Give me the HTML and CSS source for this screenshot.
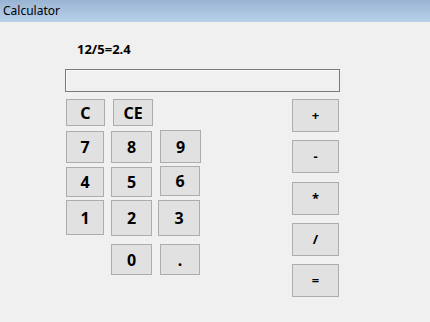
FILE: index.html
```html
<!DOCTYPE html>
<html>
<head>
<meta charset="utf-8">
<title>Calculator</title>
<link rel="stylesheet" href="styles.css">
</head>
<body>
<div class="window">
  <div class="titlebar">Calculator</div>
  <div class="content">
    <div class="result">12/5=2.4</div>
    <div class="display"></div>
    <div class="main">
      <div class="keypad">
        <div class="row r1">
          <button class="key k-c">C</button>
          <button class="key k-ce">CE</button>
        </div>
        <div class="row r2">
          <button class="key k-7">7</button>
          <button class="key k-8">8</button>
          <button class="key k-9">9</button>
        </div>
        <div class="row r3">
          <button class="key k-4">4</button>
          <button class="key k-5">5</button>
          <button class="key k-6">6</button>
        </div>
        <div class="row r4">
          <button class="key k-1">1</button>
          <button class="key k-2">2</button>
          <button class="key k-3">3</button>
        </div>
        <div class="row r5">
          <button class="key k-0">0</button>
          <button class="key k-dot">.</button>
        </div>
      </div>
      <div class="ops">
        <button class="key op">+</button>
        <button class="key op">-</button>
        <button class="key op">*</button>
        <button class="key op">/</button>
        <button class="key op">=</button>
      </div>
    </div>
  </div>
</div>
</body>
</html>
```

FILE: styles.css
```css
* { box-sizing: border-box; }
html, body {
  margin: 0;
  padding: 0;
  background: #f0f0f0;
  width: 430px;
  height: 322px;
  overflow: hidden;
  font-family: "Noto Sans", "Open Sans", sans-serif;
}
.titlebar {
  height: 22px;
  background: linear-gradient(to bottom, #99b4d3, #b9d1ea);
  color: #000;
  font-size: 12px;
  line-height: 21px;
  padding-left: 3px;
}
.content {
  padding-left: 65px;
}
.result {
  margin-top: 18px;
  margin-left: 12px;
  height: 18px;
  font-size: 13px;
  font-weight: bold;
  line-height: 18px;
  color: #000;
}
.display {
  margin-top: 11px;
  width: 275px;
  height: 23px;
  border: 1px solid #7a7a7a;
  box-shadow: inset 1px 1px 0 #fafafa;
  background: #f0f0f0;
}
.main {
  display: flex;
  align-items: flex-start;
}
.keypad {
  width: 227px;
  padding-left: 1px;
}
.row {
  display: flex;
  align-items: flex-start;
}
.key {
  margin: 0;
  padding: 0;
  background: #e1e1e1;
  border: 1px solid #adadad;
  color: #000;
  font-family: inherit;
  font-weight: bold;
  font-size: 16px;
  line-height: 1;
  display: flex;
  align-items: center;
  justify-content: center;
}
.r1 { margin-top: 7px; }
.r2 { margin-top: 4px; }
.r3 { margin-top: 3px; }
.r4 { margin-top: 3px; }
.r5 { margin-top: 8px; }

.k-c  { width: 39px; height: 27px; }
.k-ce { width: 40px; height: 27px; margin-left: 8px; }

.k-7 { width: 38px; height: 32px; margin-top: 1px; }
.k-8 { width: 41px; height: 32px; margin-top: 1px; margin-left: 7px; }
.k-9 { width: 41px; height: 33px; margin-left: 8px; }

.k-4 { width: 38px; height: 30px; margin-top: 1px; }
.k-5 { width: 41px; height: 30px; margin-top: 1px; margin-left: 7px; }
.k-6 { width: 40px; height: 30px; margin-left: 8px; }

.k-1 { width: 38px; height: 35px; }
.k-2 { width: 41px; height: 36px; margin-left: 7px; }
.k-3 { width: 42px; height: 36px; margin-left: 6px; }

.k-0   { width: 41px; height: 31px; margin-left: 45px; }
.k-dot { width: 40px; height: 31px; margin-left: 8px; }

.ops {
  display: flex;
  flex-direction: column;
  margin-top: 7px;
}
.op {
  width: 47px;
  height: 33px;
  font-size: 13px;
  margin-bottom: 8px;
}
.op:nth-child(2) { margin-bottom: 9px; }
```
